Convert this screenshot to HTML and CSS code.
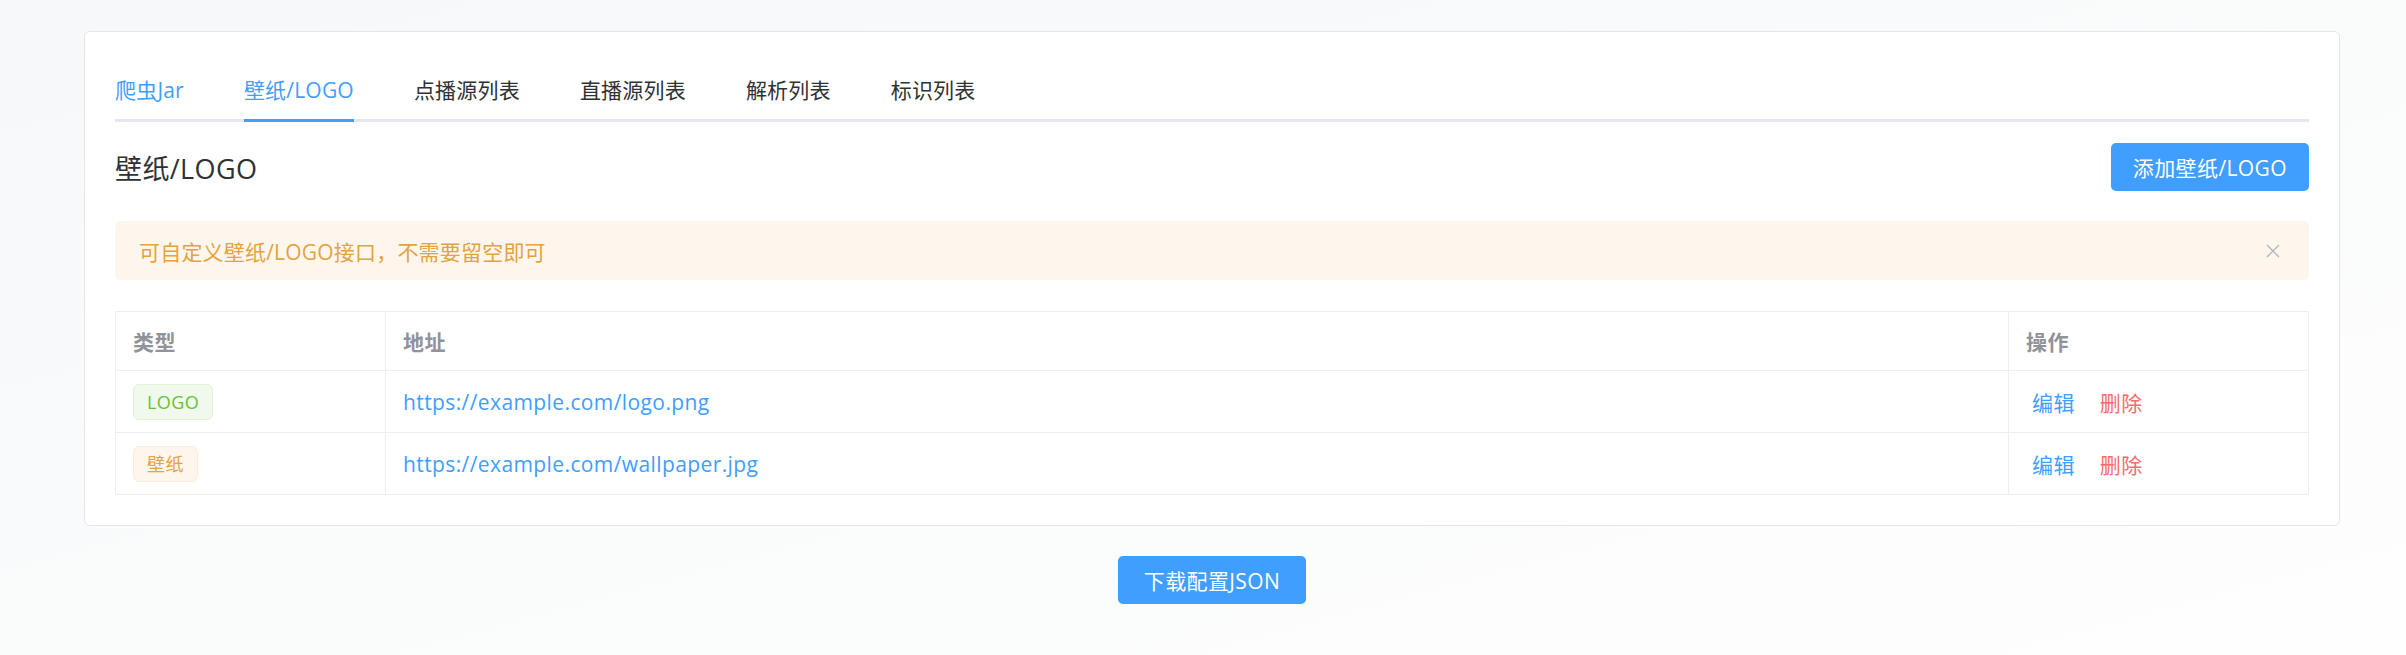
FILE: index.html
```html
<!DOCTYPE html>
<html>
<head>
    <meta charset="utf-8">
    <title>配置管理</title>
    <link rel="stylesheet" href="styles.css">
</head>
<body>
    <div class="page">
        <div class="card">
            <div class="tabs">
                <div class="tab tab-hover">爬虫Jar</div>
                <div class="tab active">壁纸/LOGO</div>
                <div class="tab">点播源列表</div>
                <div class="tab">直播源列表</div>
                <div class="tab">解析列表</div>
                <div class="tab">标识列表</div>
            </div>

            <div class="section-head">
                <h3>壁纸/LOGO</h3>
                <button class="btn btn-small">添加壁纸/LOGO</button>
            </div>

            <div class="alert">
                <span>可自定义壁纸/LOGO接口，不需要留空即可</span>
                <svg class="alert-close" width="14" height="14" viewBox="0 0 14 14">
                    <path d="M1 1L13 13M13 1L1 13" stroke="#b4b6bc" stroke-width="1.4" fill="none"/>
                </svg>
            </div>

            <table class="data-table">
                <thead>
                    <tr><th class="col-type">类型</th><th>地址</th><th class="col-ops">操作</th></tr>
                </thead>
                <tbody>
                    <tr>
                        <td><span class="tag tag-success">LOGO</span></td>
                        <td><a class="link" href="#">https://example.com/logo.png</a></td>
                        <td><span class="action">编辑</span><span class="action danger">删除</span></td>
                    </tr>
                    <tr>
                        <td><span class="tag tag-warning">壁纸</span></td>
                        <td><a class="link" href="#">https://example.com/wallpaper.jpg</a></td>
                        <td><span class="action">编辑</span><span class="action danger">删除</span></td>
                    </tr>
                </tbody>
            </table>
        </div>

        <div class="footer">
            <button class="btn btn-download">下载配置JSON</button>
        </div>
    </div>
</body>
</html>
```

FILE: styles.css
```css
html, body {
    min-height: 100%;
}

body {
    margin: 0;
    font-family: "Open Sans", "Noto Sans CJK SC", sans-serif;
    letter-spacing: 0.4px;
    background: linear-gradient(to bottom right, #f6f8f9, #fefefe);
    color: #303133;
}

.page {
    padding: 31px 66px 40px 84px;
}

.card {
    background: #fff;
    border: 1px solid #e2e6ec;
    border-radius: 6px;
    padding: 30px 30px 30px;
}

/* tabs */
.tabs {
    display: flex;
    gap: 60px;
    border-bottom: 3px solid #e4e7ed;
}

.tab {
    font-size: 21px;
    line-height: 57px;
    letter-spacing: 0.2px;
    color: #303133;
    border-bottom: 3px solid transparent;
    margin-bottom: -3px;
    cursor: pointer;
}

.tab-hover, .tab.active {
    color: #409eff;
}

.tab.active {
    border-bottom-color: #409eff;
}

/* heading row */
.section-head {
    display: flex;
    justify-content: space-between;
    align-items: center;
    margin-top: 21px;
}

.section-head h3 {
    margin: 0;
    font-size: 27px;
    font-weight: normal;
    color: #303133;
}

.btn {
    background: #409eff;
    color: #fff;
    border: none;
    border-radius: 5px;
    font-family: inherit;
    letter-spacing: inherit;
    cursor: pointer;
}

.btn-small {
    height: 48px;
    padding: 0 22px;
    font-size: 21px;
}

/* alert */
.alert {
    display: flex;
    justify-content: space-between;
    align-items: center;
    height: 59px;
    margin-top: 30px;
    padding: 0 29px 0 24px;
    background: #fdf6ec;
    color: #e6a23c;
    font-size: 21px;
    letter-spacing: 0.2px;
    border-radius: 6px;
}

/* table */
.data-table {
    width: 100%;
    margin-top: 31px;
    border-collapse: collapse;
    border: 1px solid #ebeef5;
    font-size: 21px;
    text-align: left;
}

.data-table th, .data-table td {
    border: 1px solid #ebeef5;
    padding: 0 17px;
}

.data-table th {
    height: 58px;
    color: #909399;
    font-weight: bold;
}

.data-table td {
    height: 60px;
    padding-top: 1px;
}

.col-type {
    width: 270px;
    box-sizing: border-box;
}

.col-ops {
    width: 300px;
    box-sizing: border-box;
}

.tag {
    display: inline-block;
    height: 36px;
    line-height: 34px;
    box-sizing: border-box;
    padding: 0 13px;
    font-size: 18px;
    border: 1px solid;
    border-radius: 6px;
}

.tag-success {
    background: #f0f9eb;
    border-color: #e1f3d8;
    color: #67c23a;
}

.tag-warning {
    background: #fdf6ec;
    border-color: #faecd8;
    color: #e6a23c;
}

.link {
    color: #409eff;
    text-decoration: none;
}

.action {
    color: #409eff;
    padding: 0 6px;
    cursor: pointer;
}

.action + .action {
    margin-left: 13px;
}

.action.danger {
    color: #f56c6c;
}

/* footer */
.footer {
    display: flex;
    justify-content: center;
    margin-top: 30px;
}

.btn-download {
    height: 48px;
    padding: 0 26px;
    font-size: 21px;
}
```
